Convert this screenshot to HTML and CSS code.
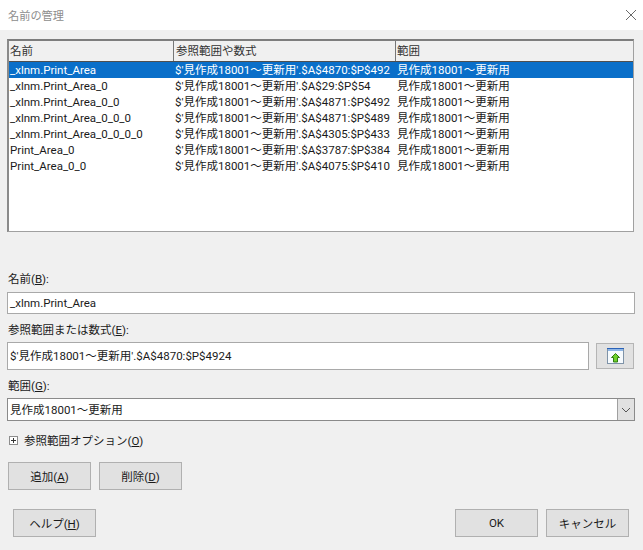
FILE: index.html
```html
<!DOCTYPE html>
<html lang="ja">
<head>
<meta charset="utf-8">
<title>名前の管理</title>
<link rel="stylesheet" href="styles.css">
</head>
<body>
<div class="dialog">
  <header class="titlebar">
    <span class="title">名前の管理</span>
    <svg class="close" width="12" height="12" viewBox="0 0 12 12"><path d="M1 1L11 11M11 1L1 11" stroke="#6a6a6a" stroke-width="1" fill="none"/></svg>
  </header>
  <main class="content">
    <section class="table">
      <div class="row head"><span class="c1">名前</span><span class="c2">参照範囲や数式</span><span class="c3">範囲</span></div>
      <div class="row selected"><span class="c1">_xlnm.Print_Area</span><span class="c2">$'見作成18001～更新用'.$A$4870:$P$492</span><span class="c3">見作成18001～更新用</span></div>
      <div class="row"><span class="c1">_xlnm.Print_Area_0</span><span class="c2">$'見作成18001～更新用'.$A$29:$P$54</span><span class="c3">見作成18001～更新用</span></div>
      <div class="row"><span class="c1">_xlnm.Print_Area_0_0</span><span class="c2">$'見作成18001～更新用'.$A$4871:$P$492</span><span class="c3">見作成18001～更新用</span></div>
      <div class="row"><span class="c1">_xlnm.Print_Area_0_0_0</span><span class="c2">$'見作成18001～更新用'.$A$4871:$P$489</span><span class="c3">見作成18001～更新用</span></div>
      <div class="row"><span class="c1">_xlnm.Print_Area_0_0_0_0</span><span class="c2">$'見作成18001～更新用'.$A$4305:$P$433</span><span class="c3">見作成18001～更新用</span></div>
      <div class="row"><span class="c1">Print_Area_0</span><span class="c2">$'見作成18001～更新用'.$A$3787:$P$384</span><span class="c3">見作成18001～更新用</span></div>
      <div class="row"><span class="c1">Print_Area_0_0</span><span class="c2">$'見作成18001～更新用'.$A$4075:$P$410</span><span class="c3">見作成18001～更新用</span></div>
    </section>
    <label class="label first">名前(<u>B</u>):</label>
    <div class="field name">_xlnm.Print_Area</div>
    <label class="label second">参照範囲または数式(<u>E</u>):</label>
    <div class="formula">
      <div class="field grow">$'見作成18001～更新用'.$A$4870:$P$4924</div>
      <button class="shrink" type="button" aria-label="縮小">
        <svg width="17" height="16" viewBox="0 0 17 16">
          <rect x="0.5" y="0.5" width="16" height="15" fill="#f6fafd" stroke="#7f93a8"/>
          <rect x="0" y="0" width="17" height="1" fill="#2a62b8"/>
          <rect x="1" y="1" width="15" height="2" fill="#8fb6e6"/>
          <path d="M8.5 5.5L12.5 9.5H10.5V14H6.5V9.5H4.5Z" fill="#6fd02a" stroke="#2f7d10" stroke-width="1"/>
        </svg>
      </button>
    </div>
    <label class="label third">範囲(<u>G</u>):</label>
    <div class="select">
      <span class="select-text">見作成18001～更新用</span>
      <span class="arrow"><svg width="10" height="6" viewBox="0 0 10 6"><path d="M1 1L5 5L9 1" stroke="#555" fill="none"/></svg></span>
    </div>
    <div class="options">
      <span class="plus"></span>
      <span>参照範囲オプション(<u>O</u>)</span>
    </div>
    <div class="actions">
      <button class="btn" type="button">追加(<u>A</u>)</button>
      <button class="btn" type="button">削除(<u>D</u>)</button>
    </div>
    <div class="footer">
      <button class="btn" type="button">ヘルプ(<u>H</u>)</button>
      <div class="right">
        <button class="btn" type="button">OK</button>
        <button class="btn" type="button">キャンセル</button>
      </div>
    </div>
  </main>
</div>
</body>
</html>
```
FILE: styles.css
```css
* { box-sizing: border-box; }
html, body { margin: 0; padding: 0; }
body {
  width: 643px;
  height: 550px;
  overflow: hidden;
  font-family: Roboto, "Noto Sans CJK JP", sans-serif;
  font-size: 11.5px;
  color: #1a1a1a;
  background: #f0f0f0;
}
.dialog { display: flex; flex-direction: column; height: 550px; }
.titlebar {
  height: 30px;
  flex: none;
  background: #fff;
  display: flex;
  align-items: center;
  justify-content: space-between;
  padding: 0 6px 1px 8px;
}
.title { color: #8d8d8d; font-size: 11.2px; }
.content { flex: 1; padding: 9px 8px 0 7px; }
.table {
  height: 193px;
  margin-right: 1px;
  background: #fff;
  border: 1px solid #a0a0a0;
  border-top: 2px solid #7d7d7d;
  border-left: 2px solid #8a8a8a;
}
.row { display: flex; height: 16px; line-height: 16px; white-space: nowrap; }
.c1 { width: 165px; padding-left: 1px; flex: none; }
.c2 { width: 222px; flex: none; padding-left: 1px; }
.c3 { flex: 1; padding-left: 1px; }
.row.head {
  height: 21px;
  line-height: 20px;
  background: #f0f0f0;
  border-bottom: 1px solid #4f4f4f;
  color: #333;
}
.row.head .c1 { border-right: 1px solid #777; }
.row.head .c2 { border-right: 1px solid #777; padding-left: 2px; }
.row.selected { background: #0a6fc9; color: #fff; }
.label { display: block; height: 16px; line-height: 16px; padding-left: 1px; }
.first { margin-top: 39px; }
.second { margin-top: 7px; line-height: 18px; }
.third { margin-top: 7px; line-height: 18px; }
.field {
  background: #fff;
  border: 1px solid #a9a9a9;
  padding-left: 2px;
  white-space: nowrap;
}
.name { margin-top: 5px; height: 22px; line-height: 21px; }
.formula { display: flex; justify-content: space-between; margin-top: 5px; align-items: center; }
.grow { width: 582px; height: 28px; line-height: 27px; }
.shrink {
  width: 38px;
  height: 26px;
  margin-right: 1px;
  padding: 0;
  background: #e1e1e1;
  border: 1px solid #b5b5b5;
  display: flex;
  align-items: center;
  justify-content: center;
}
.select {
  margin-top: 5px;
  height: 23px;
  background: #fff;
  border: 1px solid #8a8a8a;
  display: flex;
  justify-content: space-between;
  align-items: stretch;
  padding-left: 2px;
}
.select-text { line-height: 22px; }
.arrow {
  width: 17px;
  background: #e1e1e1;
  border-left: 1px solid #a0a0a0;
  display: flex;
  align-items: center;
  justify-content: center;
}
.options { display: flex; align-items: center; gap: 6px; margin-top: 11px; height: 16px; padding-left: 2px; }
.plus {
  width: 9px;
  height: 9px;
  border: 1px solid #8d8d8d;
  background:
    linear-gradient(#333, #333) center / 5px 1px no-repeat,
    linear-gradient(#333, #333) center / 1px 5px no-repeat,
    #fff;
}
.actions { display: flex; gap: 8px; margin-top: 14px; padding-left: 1px; }
.btn {
  width: 83px;
  height: 28px;
  padding: 0;
  background: #e1e1e1;
  border: 1px solid #b0b0b0;
  color: #1a1a1a;
  font: inherit;
}
.footer { display: flex; justify-content: space-between; margin-top: 19px; padding-left: 6px; padding-right: 6px; }
.right { display: flex; gap: 8px; }
```
